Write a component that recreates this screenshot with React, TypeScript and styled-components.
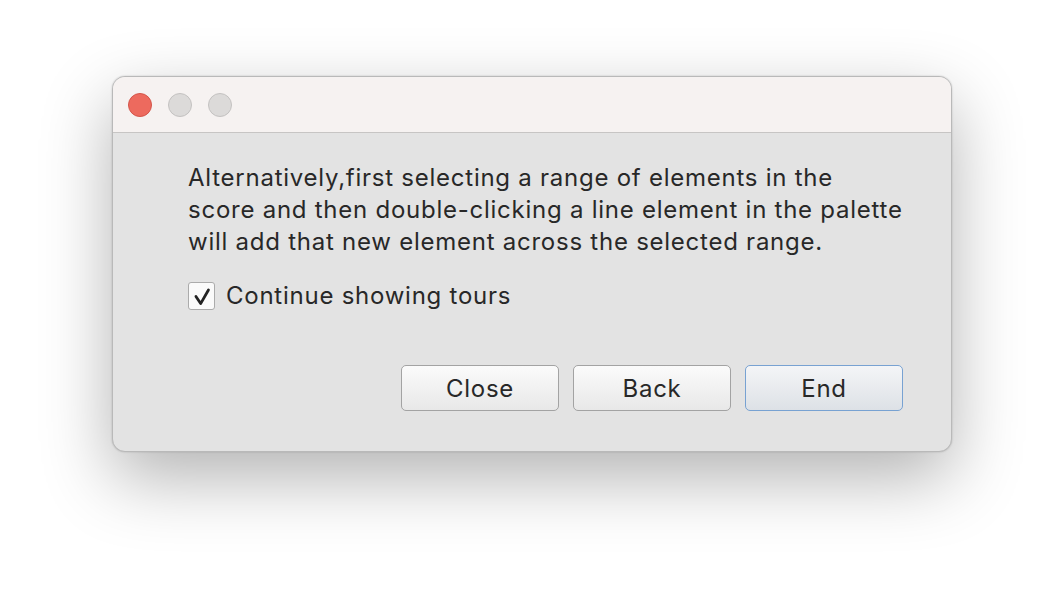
import React from "react";
import styled, { createGlobalStyle } from "styled-components";

const Global = createGlobalStyle`
  html, body { margin: 0; padding: 0; background: #ffffff; }
  body { font-family: Inter, "Liberation Sans", Arial, sans-serif; }
`;

const Stage = styled.div`
  width: 1064px;
  height: 600px;
  box-sizing: border-box;
  padding: 76px 0 0 112px;
`;

const Window = styled.div`
  width: 840px;
  height: 376px;
  box-sizing: border-box;
  border-radius: 13px;
  border: 1px solid #b9b9b9;
  background: #e3e3e3;
  overflow: hidden;
  box-shadow: 0 26px 70px rgba(0, 0, 0, 0.3), 0 0 2px rgba(0, 0, 0, 0.2);
  display: flex;
  flex-direction: column;
`;

const TitleBar = styled.div`
  height: 55px;
  flex: none;
  background: #f6f2f1;
  border-bottom: 1px solid #c7c5c4;
  display: flex;
  align-items: center;
  gap: 16px;
  padding-left: 15px;
`;

const Light = styled.span<{ $color: string; $border: string }>`
  width: 24px;
  height: 24px;
  box-sizing: border-box;
  border-radius: 50%;
  background: ${(p) => p.$color};
  border: 1px solid ${(p) => p.$border};
`;

const Body = styled.div`
  flex: 1;
  display: flex;
  flex-direction: column;
  padding: 29px 48px 40px 75px;
`;

const Message = styled.p`
  margin: 0;
  font-size: 24px;
  line-height: 32px;
  letter-spacing: 0.75px;
  color: #282828;
  white-space: nowrap;
`;

const CheckRow = styled.label`
  display: flex;
  align-items: center;
  gap: 11px;
  margin-top: 23px;
  font-size: 24px;
  letter-spacing: 0.75px;
  color: #282828;
`;

const Box = styled.span`
  width: 27px;
  height: 28px;
  box-sizing: border-box;
  border: 1px solid #ababab;
  border-radius: 3px;
  background: #fafafa;
  display: flex;
  align-items: center;
  justify-content: center;
`;

const Buttons = styled.div`
  margin-top: auto;
  display: flex;
  justify-content: flex-end;
  gap: 14px;
`;

const Button = styled.button<{ $default?: boolean }>`
  width: 158px;
  height: 46px;
  box-sizing: border-box;
  border-radius: 5px;
  border: 1.5px solid ${(p) => (p.$default ? "#78a2d2" : "#a3a3a3")};
  background: ${(p) =>
    p.$default
      ? "linear-gradient(#f4f5f7, #dde1e6)"
      : "linear-gradient(#fbfbfb, #e8e8e8)"};
  font-family: Inter, "Liberation Sans", Arial, sans-serif;
  font-size: 24px;
  letter-spacing: 0.75px;
  color: #282828;
  padding: 0;
`;

export default function App() {
  return (
    <Stage>
      <Global />
      <Window>
        <TitleBar>
          <Light $color="#ed6a5e" $border="#d4554a" />
          <Light $color="#dcdad9" $border="#c4c2c1" />
          <Light $color="#dcdad9" $border="#c4c2c1" />
        </TitleBar>
        <Body>
          <Message>
            Alternatively,first selecting a range of elements in the
            <br />
            score and then double-clicking a line element in the palette
            <br />
            will add that new element across the selected range.
          </Message>
          <CheckRow>
            <Box>
              <svg width="27" height="28" viewBox="0 0 27 28">
                <path
                  d="M7.5 14.5 L12.6 22.2 L21 7.5"
                  fill="none"
                  stroke="#222"
                  strokeWidth="3"
                  strokeLinecap="round"
                  strokeLinejoin="round"
                />
              </svg>
            </Box>
            Continue showing tours
          </CheckRow>
          <Buttons>
            <Button>Close</Button>
            <Button>Back</Button>
            <Button $default>End</Button>
          </Buttons>
        </Body>
      </Window>
    </Stage>
  );
}
